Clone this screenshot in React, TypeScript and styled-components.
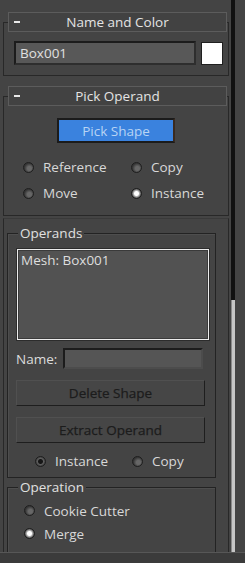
import React from 'react';
import styled, { createGlobalStyle } from 'styled-components';

const GlobalStyle = createGlobalStyle`
  html, body {
    margin: 0;
    padding: 0;
    background: #444444;
  }
  body {
    font-family: "Open Sans", "Noto Sans", sans-serif;
    font-size: 13.5px;
    color: #dcdcdc;
  }
`;

const Screen = styled.div`
  width: 245px;
  height: 563px;
  display: flex;
  flex-direction: column;
  background: #444444;
  overflow: hidden;
`;

const Main = styled.div`
  flex: 0 0 552px;
  display: flex;
  overflow: hidden;
`;

const Column = styled.div`
  width: 231px;
  display: flex;
  flex-direction: column;
`;

const ScrollBar = styled.div`
  width: 4px;
  display: flex;
  flex-direction: column;
`;

const Track = styled.div`
  flex: 0 0 300px;
  background: #111111;
`;

const Thumb = styled.div`
  flex: 1;
  background: #c6c6c6;
  border-left: 1px solid #8a8a8a;
`;

const Footer = styled.div`
  flex: 1;
  background: #3b3b3b;
  border-top: 1px solid #575757;
`;

const Rollout = styled.section<{ $top: number; $open?: boolean }>`
  margin: ${p => p.$top}px 0 0 3px;
  width: 224px;
  border: 1px solid #282828;
  border-top-color: ${p => (p.$open ? '#3a3a3a' : '#282828')};
  flex: ${p => (p.$open ? 1 : 'none')};
`;

const RolloutHeader = styled.div`
  margin: -11px 1px 0 4px;
  height: 18px;
  border: 1px solid #5c5c5c;
  background: #424242;
  display: flex;
  align-items: center;
  position: relative;
  justify-content: center;
  color: #e4e4e4;
  line-height: 18px;
`;

const Minus = styled.span`
  position: absolute;
  left: 5px;
  top: 8px;
  width: 6px;
  height: 2px;
  background: #e8e8e8;
`;

const NameRow = styled.div`
  display: flex;
  align-items: center;
  gap: 5px;
  padding: 9px 0 10px 10px;
`;

const NameField = styled.div`
  width: 174px;
  height: 20px;
  border: 2px solid #1c1c1c;
  border-right-color: #2e2e2e;
  border-bottom-color: #2e2e2e;
  background: #585858;
  padding-left: 4px;
  line-height: 20px;
  color: #e0e0e0;
`;

const Swatch = styled.div`
  width: 20px;
  height: 21px;
  background: #ffffff;
  border: 1px solid #202020;
`;

const PickBody = styled.div`
  padding: 12px 0 9px 0;
  display: flex;
  flex-direction: column;
  align-items: center;
`;

const PickButton = styled.div`
  width: 114px;
  height: 21px;
  border: 2px solid #1b1b1b;
  border-right-color: #3a2a20;
  background: #3a82de;
  color: #b8d4f4;
  display: flex;
  align-items: center;
  justify-content: center;
`;

const RadioGrid = styled.div`
  margin-top: 11px;
  width: 100%;
  display: grid;
  grid-template-columns: 108px 1fr;
  grid-auto-rows: 26px;
  padding-left: 19px;
  box-sizing: border-box;
`;

const RadioItem = styled.div`
  display: flex;
  align-items: center;
  gap: 9px;
  color: #d8d8d8;
`;

const RadioDot = styled.span<{ $checked?: boolean; $dim?: boolean }>`
  flex: none;
  width: 11px;
  height: 11px;
  border-radius: 50%;
  box-sizing: border-box;
  border: 1px solid #1e1e1e;
  background: ${p =>
    p.$checked
      ? p.$dim
        ? 'radial-gradient(circle, #161616 0 2px, #5e5e5e 3px, #3a3a3a 5px)'
        : 'radial-gradient(circle, #ffffff 0 2px, #b0b0b0 3px, #3a3a3a 5px)'
      : 'radial-gradient(circle at 60% 60%, #676767 0 2px, #363636 5px)'};
`;

const Params = styled.div`
  padding: 14px 0 0 3px;
`;

const Group = styled.div<{ $top?: number; $bottom?: number }>`
  margin-top: ${p => p.$top ?? 0}px;
  width: 207px;
  border: 1px solid #232323;
  box-shadow: inset 1px 1px 0 #4e4e4e;
  padding-bottom: ${p => p.$bottom ?? 0}px;
`;

const Legend = styled.div`
  margin: -9px 0 0 10px;
  padding: 0 2px;
  width: fit-content;
  background: #444444;
  line-height: 16px;
  color: #e0e0e0;
`;

const ListBox = styled.div`
  margin: 8px 0 0 9px;
  width: 184px;
  height: 87px;
  border: 1px solid #ececec;
  box-shadow: 0 0 0 1px #2c2c2c, inset 0 0 0 1px #3a3a3a;
  background: #525252;
  padding: 1px 3px;
  line-height: 18px;
  color: #dedede;
`;

const FieldRow = styled.div`
  margin: 8px 0 0 8px;
  display: flex;
  align-items: center;
  gap: 6px;
  height: 21px;
`;

const Input = styled.div`
  width: 136px;
  height: 17px;
  border: 2px solid #1c1c1c;
  border-right-color: #4c4c4c;
  border-bottom-color: #4c4c4c;
  background: #555555;
`;

const FlatButton = styled.div`
  margin: 11px 0 0 8px;
  width: 187px;
  height: 24px;
  border: 1px solid #505050;
  border-right-color: #1e1e1e;
  border-bottom-color: #1e1e1e;
  background: #464646;
  color: #1c1c1c;
  -webkit-text-stroke: 0.25px #1c1c1c;
  display: flex;
  align-items: center;
  justify-content: center;
`;

const InlineRadios = styled.div`
  margin: 9px 0 0 27px;
  height: 18px;
  display: grid;
  grid-template-columns: 97px 1fr;
`;

const StackRadios = styled.div`
  padding: 4px 0 0 16px;
  display: grid;
  grid-auto-rows: 23px;
`;

const Radio: React.FC<{ label: string; checked?: boolean; dim?: boolean }> = ({ label, checked, dim }) => (
  <RadioItem>
    <RadioDot $checked={checked} $dim={dim} />
    {label}
  </RadioItem>
);

export default function App() {
  return (
    <>
      <GlobalStyle />
      <Screen>
        <Main>
          <Column>
            <Rollout $top={22}>
              <RolloutHeader>
                <Minus />
                Name and Color
              </RolloutHeader>
              <NameRow>
                <NameField>Box001</NameField>
                <Swatch />
              </NameRow>
            </Rollout>

            <Rollout $top={20}>
              <RolloutHeader>
                <Minus />
                Pick Operand
              </RolloutHeader>
              <PickBody>
                <PickButton>Pick Shape</PickButton>
                <RadioGrid>
                  <Radio label="Reference" />
                  <Radio label="Copy" />
                  <Radio label="Move" />
                  <Radio label="Instance" checked />
                </RadioGrid>
              </PickBody>
            </Rollout>

            <Rollout $top={2} $open>
              <Params>
                <Group $bottom={7}>
                  <Legend>Operands</Legend>
                  <ListBox>Mesh: Box001</ListBox>
                  <FieldRow>
                    Name:
                    <Input />
                  </FieldRow>
                  <FlatButton>Delete Shape</FlatButton>
                  <FlatButton>Extract Operand</FlatButton>
                  <InlineRadios>
                    <Radio label="Instance" checked dim />
                    <Radio label="Copy" />
                  </InlineRadios>
                </Group>
                <Group $top={9} $bottom={20}>
                  <Legend>Operation</Legend>
                  <StackRadios>
                    <Radio label="Cookie Cutter" />
                    <Radio label="Merge" checked />
                  </StackRadios>
                </Group>
              </Params>
            </Rollout>
          </Column>
          <ScrollBar>
            <Track />
            <Thumb />
          </ScrollBar>
        </Main>
        <Footer />
      </Screen>
    </>
  );
}
